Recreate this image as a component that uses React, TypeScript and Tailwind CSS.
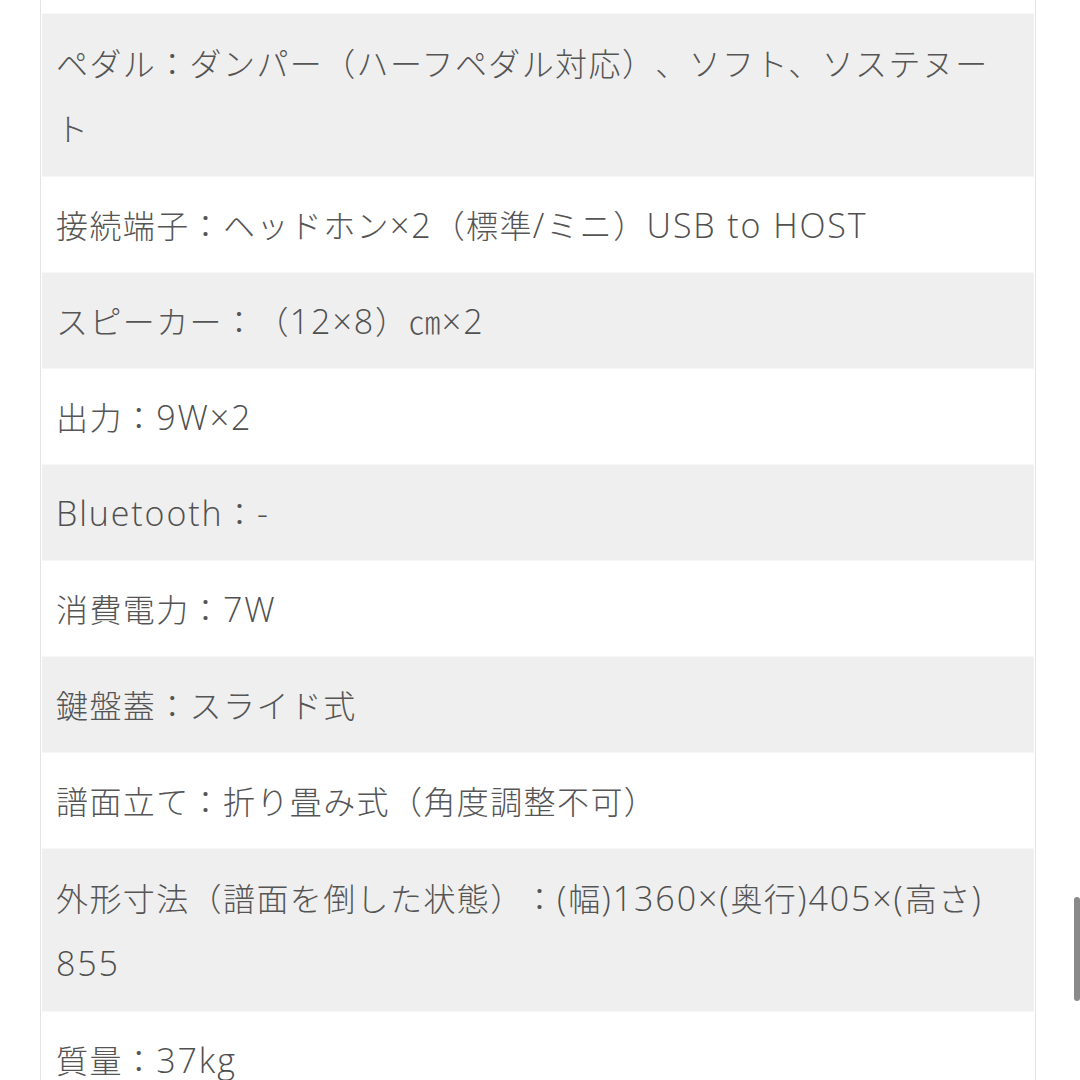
const rows: { lines: string[]; gray: boolean }[] = [
  { lines: ["ペダル：ダンパー（ハーフペダル対応）、ソフト、ソステヌー", "ト"], gray: true },
  { lines: ["接続端子：ヘッドホン×2（標準/ミニ）USB to HOST"], gray: false },
  { lines: ["スピーカー：（12×8）㎝×2"], gray: true },
  { lines: ["出力：9W×2"], gray: false },
  { lines: ["Bluetooth：-"], gray: true },
  { lines: ["消費電力：7W"], gray: false },
  { lines: ["鍵盤蓋：スライド式"], gray: true },
  { lines: ["譜面立て：折り畳み式（角度調整不可）"], gray: false },
  { lines: ["外形寸法（譜面を倒した状態）：(幅)1360×(奥行)405×(高さ)", "855"], gray: true },
  { lines: ["質量：37kg"], gray: false },
];

// latin runs are set a touch larger and looser, like the system font's wide latin glyphs
function Line({ text }: { text: string }) {
  const parts = text.split(/([\x20-\x7E×]+)/).filter(Boolean);
  return (
    <div className="h-[65px] whitespace-nowrap">
      {parts.map((p, i) =>
        /^[\x20-\x7E×]+$/.test(p) ? (
          <span
            key={i}
            className="text-[34px] leading-none tracking-[1.9px] text-[#505050]"
            style={{ fontFamily: '"Open Sans", sans-serif' }}
          >
            {p}
          </span>
        ) : (
          <span key={i}>{p}</span>
        ),
      )}
    </div>
  );
}

export default function App() {
  return (
    <div
      className="relative h-[1080px] w-[1080px] overflow-hidden bg-white text-[#555] [text-spacing-trim:space-all]"
      style={{ fontFamily: '"Noto Sans CJK JP", sans-serif' }}
    >
      <div className="ml-[40px] w-[996px] border-x border-[#e4e4e4] bg-white px-px">
        {/* tail of the row above, cut off by the viewport */}
        <div className="h-[13px] bg-white" />
        {rows.map((row, i) => (
          <div
            key={i}
            className={`border-t border-[#f7f7f7] px-[14px] text-[32px] font-light leading-[65px] tracking-[1.4px] ${
              row.lines.length > 1 ? "py-[16px]" : "py-[15px]"
            } ${row.gray ? "bg-[#efefef]" : "bg-white"}`}
          >
            {row.lines.map((line, j) => (
              <Line key={j} text={line} />
            ))}
          </div>
        ))}
      </div>
      <div className="absolute left-[1074px] top-[897px] h-[104px] w-[6px] rounded-full bg-[#8a8a8a]" />
    </div>
  );
}
